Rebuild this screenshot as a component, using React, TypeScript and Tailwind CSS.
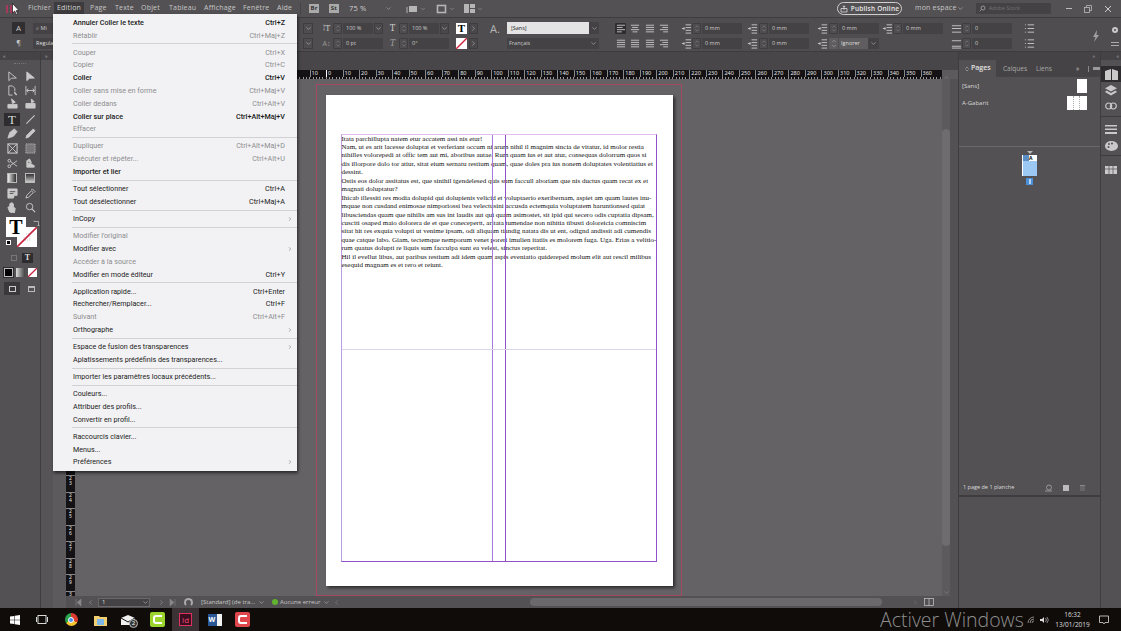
import React from "react";
import { ChevronDown, ChevronRight, ChevronLeft, ChevronUp, ChevronsUpDown } from "lucide-react";

const ui = { fontFamily: '"Open Sans", "Noto Sans", sans-serif' };
const menuFont = { fontFamily: 'Roboto, "Open Sans", sans-serif' };
const C = "#c9c9c9";

type MI = { t: string; s?: string; d?: boolean; b?: boolean; a?: boolean };
const groups: MI[][] = [
  [{ t: "Annuler Coller le texte", s: "Ctrl+Z", b: true }, { t: "Rétablir", s: "Ctrl+Maj+Z", d: true }],
  [
    { t: "Couper", s: "Ctrl+X", d: true },
    { t: "Copier", s: "Ctrl+C", d: true },
    { t: "Coller", s: "Ctrl+V", b: true },
    { t: "Coller sans mise en forme", s: "Ctrl+Maj+V", d: true },
    { t: "Coller dedans", s: "Ctrl+Alt+V", d: true },
    { t: "Coller sur place", s: "Ctrl+Alt+Maj+V", b: true },
    { t: "Effacer", d: true },
  ],
  [
    { t: "Dupliquer", s: "Ctrl+Alt+Maj+D", d: true },
    { t: "Exécuter et répéter...", s: "Ctrl+Alt+U", d: true },
    { t: "Importer et lier", b: true },
  ],
  [{ t: "Tout sélectionner", s: "Ctrl+A" }, { t: "Tout désélectionner", s: "Ctrl+Maj+A" }],
  [{ t: "InCopy", a: true }],
  [
    { t: "Modifier l'original", d: true },
    { t: "Modifier avec", a: true },
    { t: "Accéder à la source", d: true },
    { t: "Modifier en mode éditeur", s: "Ctrl+Y" },
  ],
  [
    { t: "Application rapide...", s: "Ctrl+Enter" },
    { t: "Rechercher/Remplacer...", s: "Ctrl+F" },
    { t: "Suivant", s: "Ctrl+Alt+F", d: true },
    { t: "Orthographe", a: true },
  ],
  [{ t: "Espace de fusion des transparences", a: true }, { t: "Aplatissements prédéfinis des transparences..." }],
  [{ t: "Importer les paramètres locaux précédents..." }],
  [{ t: "Couleurs..." }, { t: "Attribuer des profils..." }, { t: "Convertir en profil..." }],
  [{ t: "Raccourcis clavier..." }, { t: "Menus..." }, { t: "Préférences", a: true }],
];

const bodyText = [
  "Itata parchillupta natem etur accatem assi nis etur!",
  "Nam, ut es arit lacesse doluptat et verferiant occum ni arum nihil il magnim sincia de vitatur, id molor restia",
  "nihilles volorepedi at offic tem aut mi, aboribus autae. Rum quam ius et aut atur, consequas dolorrum quos si",
  "dis illorpore dolo tor atiur, sitat eium sernatu restium quam, quae doles pra ius nonem doluptates volentiatius et",
  "dessint.",
  "Ostis eos dolor assitatus est, que sinihil igendelesed quis sum faccull aboriam que nis ductus quam recat ex et",
  "magnati doluptatur?",
  "Ihicab illessiti res modia dolupid qui dolupienis velicid et voluptaerio exeribernam, aspiet am quam lautes inu-",
  "mquae non cusdand enimosae nimporiossi bea velectusini accusda ectemquia voluptatem haruntionsed quiat",
  "libusciendas quam que nihilis am sus int laudis aut qui quam asimostet, sit ipid qui secero odis cuptatia dipsam,",
  "cusciti osaped maio dolorera de et que conecepertt, aritata tumendae non nihitia tibusti doloreicia comniscim",
  "sitat hit res exquia volupti ut venime ipsam, odi aliquam tiandig natata dis ut ent, odignd andissit adi cumendis",
  "quae catque labo. Giam, tectemque nemporum venet poreri imulien itatiis es molorem fuga. Uga. Erias a velitio-",
  "rum quatus dolupti re liquis sum facculpa sunt ea velest, sinctus reperitat.",
  "Hil il evellut libus, aut paribus restium adi idem quam aspis eveniatio quidereped molum elit aut rescil milibus",
  "esequid magnam es et rero et reiunt.",
];

function I({ children, s = 11, fill = "none" }: { children: React.ReactNode; s?: number; fill?: string }) {
  return (
    <svg width={s} height={s} viewBox="0 0 12 12" fill={fill} stroke={C} strokeWidth="1" className="shrink-0">
      {children}
    </svg>
  );
}

function Spinner() {
  return (
    <div className="w-[9px] h-full flex flex-col items-center justify-center border border-[#3f3d3f] rounded-[1px] shrink-0 -space-y-[1px]">
      <ChevronUp size={6} color="#bbb" strokeWidth={1.5} />
      <ChevronDown size={6} color="#bbb" strokeWidth={1.5} />
    </div>
  );
}

function Field({ icon, v, w, iw = 16, chev }: { icon: React.ReactNode; v: string; w: number; iw?: number; chev?: boolean }) {
  return (
    <div className="h-[11px] flex items-center">
      <div className="flex justify-center shrink-0" style={{ width: iw }}>{icon}</div>
      <Spinner />
      <div className="h-full bg-[#444244] ml-[1px] flex items-center pl-[3px] text-[5.5px] text-[#d0d0d0] shrink-0" style={{ width: w }}>{v}</div>
      {chev && (
        <div className="w-[9px] h-full ml-[1px] bg-[#4a484a] border border-[#3f3d3f] flex items-center justify-center">
          <ChevronDown size={7} color="#bbb" />
        </div>
      )}
    </div>
  );
}

const AlignIcon = ({ k, on }: { k: number; on?: boolean }) => {
  const rows = [[1, 10], [1, 7], [1, 10], [1, 6]];
  const variant = (i: number) => {
    const [x, w] = rows[i];
    if (k === 1) return [x + (10 - w) / 2, w];
    if (k === 2) return [x, 10];
    if (k === 3) return [11 - w, w];
    return [x, w];
  };
  return (
    <div className={`w-[11px] h-[11px] flex items-center justify-center ${on ? "bg-[#2e2c2e] rounded-[1px]" : ""}`}>
      <svg width="10" height="9" viewBox="0 0 12 11" stroke={C} strokeWidth="1.1">
        {[0, 1, 2, 3].map((i) => {
          const [x, w] = variant(i);
          return <line key={i} x1={x} x2={x + w} y1={1.5 + i * 2.7} y2={1.5 + i * 2.7} />;
        })}
      </svg>
    </div>
  );
};

const IndentIcon = () => (
  <I>
    <path d="M5 2h6M5 5h6M5 8h6M5 11h6M1 6h2.500M3 4.500 4 6 3 7.500" />
  </I>
);

function ControlBar() {
  return (
    <div className="h-[35px] bg-[#4f4d4f] border-t border-[#3e3c3e] border-b pt-[2px] flex items-center shrink-0" style={ui}>
      <div className="w-[303px] shrink-0 flex flex-col gap-[4px] pl-[12px]">
        <div className="flex items-center h-[12px]">
          <div className="w-[13px] h-[12px] bg-[#302e30] flex items-center justify-center text-[8px] text-[#c9c9c9]">A</div>
          <div className="ml-[8px] w-[40px] h-[11px] bg-[#444244] text-[5.5px] text-[#ccc] flex items-center pl-[3px]">⌕ Mi</div>
        </div>
        <div className="flex items-center h-[11px]">
          <div className="w-[13px] text-[7px] text-center text-[#c9c9c9]">¶</div>
          <div className="ml-[8px] w-[40px] h-[11px] bg-[#444244] text-[5.5px] text-[#ddd] flex items-center pl-[3px]">Regular</div>
        </div>
      </div>
      <div className="w-[17px] shrink-0 flex flex-col gap-[4px]">
        {[0, 1].map((i) => (
          <div key={i} className="w-[10px] h-[11px] border border-[#3f3d3f] flex items-center justify-center">
            <ChevronDown size={7} color="#bbb" />
          </div>
        ))}
      </div>
      <div className="w-[66px] shrink-0 flex flex-col gap-[4px]">
        <Field icon={<span className="text-[9px] leading-none text-[#c9c9c9] font-serif">↕T</span>} v="100 %" w={30} iw={13} chev />
        <Field icon={<span className="text-[7px] leading-none text-[#9a9a9a]">A↕</span>} v="0 pt" w={40} iw={13} />
      </div>
      <div className="w-[70px] shrink-0 flex flex-col gap-[4px]">
        <Field icon={<span className="text-[10px] leading-none text-[#c9c9c9] font-serif">T</span>} v="100 %" w={30} iw={13} chev />
        <Field icon={<span className="text-[10px] leading-none italic text-[#9a9a9a] font-serif">T</span>} v="0°" w={40} iw={13} />
      </div>
      <div className="w-[34px] shrink-0 flex flex-col gap-[4px]">
        <div className="flex items-center gap-[2px] h-[11px]">
          <div className="w-[11px] h-[11px] bg-white text-black text-[11px] font-bold leading-[11px] text-center" style={{ fontFamily: '"Liberation Serif", serif' }}>T</div>
          <div className="w-[9px] h-[11px] bg-[#4a484a] border border-[#3f3d3f] flex items-center justify-center"><ChevronRight size={7} color="#bbb" /></div>
        </div>
        <div className="flex items-center gap-[2px] h-[11px]">
          <div className="w-[11px] h-[11px]">
            <svg width="11" height="11" viewBox="0 0 11 11"><rect width="11" height="11" fill="#fff" /><line x1="0" y1="11" x2="11" y2="0" stroke="#d2233f" strokeWidth="1.4" /></svg>
          </div>
          <div className="w-[9px] h-[11px] bg-[#4a484a] border border-[#3f3d3f] flex items-center justify-center"><ChevronRight size={7} color="#bbb" /></div>
        </div>
      </div>
      <div className="w-[17px] text-[11px] text-[#b5b5b5] shrink-0 pb-[14px] leading-none">A.</div>
      <div className="w-[107px] shrink-0 flex flex-col gap-[4px]">
        <div className="flex h-[12px]">
          <div className="w-[82px] bg-[#e4e4e4] text-[5.5px] text-[#222] flex items-center pl-[4px]">[Sans]</div>
          <div className="w-[10px] bg-[#444244] flex items-center justify-center"><ChevronDown size={7} color="#bbb" /></div>
        </div>
        <div className="w-[92px] h-[11px] bg-[#444244] text-[5.5px] text-[#ccc] flex items-center justify-between px-[2px]">
          Français <ChevronDown size={7} color="#bbb" />
        </div>
      </div>
      <div className="w-[67px] shrink-0 flex flex-col gap-[4px] pl-[1px]">
        <div className="flex gap-[3.5px]">{[0, 1, 2, 3].map((k) => <AlignIcon key={k} k={k} on={k === 0} />)}</div>
        <div className="flex gap-[3.5px]">{[2, 2, 2, 3].map((k, i) => <AlignIcon key={i} k={k} />)}</div>
      </div>
      <div className="w-[64px] shrink-0 flex flex-col gap-[4px]"><Field icon={<IndentIcon />} v="0 mm" w={40} iw={11} /><Field icon={<IndentIcon />} v="0 mm" w={40} iw={11} /></div>
      <div className="w-[70px] shrink-0 flex flex-col gap-[4px]"><Field icon={<IndentIcon />} v="0 mm" w={40} iw={14} /><Field icon={<IndentIcon />} v="0 mm" w={40} iw={14} /></div>
      <div className="w-[67px] shrink-0 flex flex-col gap-[4px]">
        <Field icon={<IndentIcon />} v="0 mm" w={40} iw={14} />
        <div className="h-[11px] flex items-center">
          <div className="w-[14px] flex justify-center"><IndentIcon /></div>
          <div className="w-[9px] h-full bg-[#5f5d5f] flex flex-col items-center justify-center -space-y-[1px]"><ChevronUp size={6} color="#bbb" /><ChevronDown size={6} color="#bbb" /></div>
          <div className="w-[29px] h-full bg-[#5f5d5f] ml-[1px] text-[5.5px] text-[#ddd] flex items-center pl-[2px]">Ignorer</div>
          <div className="w-[11px] h-full bg-[#444244] flex items-center justify-center"><ChevronDown size={7} color="#bbb" /></div>
        </div>
      </div>
      <div className="w-[69px] shrink-0 flex flex-col gap-[4px]">
        <Field icon={<IndentIcon />} v="0 mm" w={40} iw={11} />
        <div className="h-[11px]" />
      </div>
      <div className="w-[72px] shrink-0 flex flex-col gap-[4px]">
        <Field icon={<I><path d="M1 3h10M1 6h10M1 10h10" /></I>} v="0" w={40} iw={11} />
        <Field icon={<I><path d="M1 3h10M1 9h10M1 11h10" /></I>} v="0" w={40} iw={11} />
      </div>
      <div className="w-[69px] shrink-0 flex flex-col gap-[4px] pl-[1px]">
        <I><path d="M1 2h1M4 2h7M1 6h1M4 6h7M1 10h1M4 10h7" /></I>
        <I><path d="M1 2h1M4 2h7M1 6h1M4 6h7M1 10h1M4 10h7" /></I>
      </div>
      <div className="w-[18px] shrink-0 flex items-center">
        <svg width="8" height="12" viewBox="0 0 8 12" fill="#a0a0a0"><path d="M5 0 1 7h2.500L2 12l5-7H4.500Z" /></svg>
      </div>
      <div className="flex flex-col items-center gap-[8px] w-[10px]">
        <svg width="8" height="8" viewBox="0 0 8 8" fill={C}><circle cx="4" cy="4" r="3" /><circle cx="4" cy="4" r="1" fill="#4f4d4f" /></svg>
        <div className="w-[8px] h-[4px] border-y border-[#aaa]" />
      </div>
    </div>
  );
}

function MenuBar() {
  const items: [string, number, number][] = [["Page", 15, 6], ["Texte", 16, 10], ["Objet", 18, 10], ["Tableau", 25, 10], ["Affichage", 29, 10], ["Fenêtre", 24, 10], ["Aide", 15, 10]];
  return (
    <div className="h-[17px] bg-[#535153] flex items-center shrink-0 relative text-[7px] text-[#c7c7c7] tracking-[0.2px] whitespace-nowrap" style={ui}>
      <div className="w-[28px] shrink-0 pl-[6px] flex gap-[2px]">
        <div className="w-[2px] h-[8px] bg-[#a43b5b]" />
        <div className="w-[2px] h-[8px] bg-[#a43b5b]" />
        <div className="w-[1px] h-[8px] bg-[#a43b5b]" />
      </div>
      <div className="w-[20px] shrink-0">Fichier</div>
      <div className="ml-[6px] w-[30px] h-[14px] bg-[#3d3b3d] flex items-center justify-center shrink-0 text-[#d4d4d4]">Edition</div>
      {items.map(([t, w, m]) => (
        <div key={t} className="shrink-0" style={{ width: w, marginLeft: m }}>{t}</div>
      ))}
      <div className="ml-[8px] w-[1px] h-[11px] bg-[#444] shrink-0" />
      <div className="ml-[8px] w-[10px] h-[9px] bg-[#aaa] text-[6px] text-[#333] font-bold flex items-center justify-center shrink-0">Br</div>
      <div className="ml-[10px] w-[10px] h-[9px] bg-[#aaa] text-[6px] text-[#333] font-bold flex items-center justify-center shrink-0">St</div>
      <div className="ml-[10px] w-[26px] shrink-0 text-[#d0d0d0] text-[7.5px]">75 %</div>
      <ChevronDown size={7} color="#aaa" className="shrink-0 ml-[10px]" />
      <div className="ml-[14px] flex items-center gap-[2px] shrink-0">
        <svg width="12" height="10" viewBox="0 0 12 10" fill="#b5b5b5"><rect x="3" y="2" width="8" height="6" /><path d="M0 4h2M0 6h2M0 8h2" stroke="#b5b5b5" /></svg>
        <ChevronDown size={6} color="#aaa" />
      </div>
      <div className="ml-[10px] flex items-center gap-[2px] shrink-0">
        <svg width="11" height="10" viewBox="0 0 11 10" fill="none" stroke="#b5b5b5" strokeWidth="1.6"><rect x="1.500" y="1.500" width="8" height="7" /></svg>
        <ChevronDown size={6} color="#aaa" />
      </div>
      <div className="ml-[9px] flex items-center gap-[2px] shrink-0">
        <svg width="11" height="9" viewBox="0 0 11 9" fill="#b5b5b5"><rect width="5" height="9" /><rect x="6" width="5" height="4" /><rect x="6" y="5" width="5" height="4" /></svg>
        <ChevronDown size={6} color="#aaa" />
      </div>
      <div className="ml-auto flex items-center shrink-0">
        <div className="w-[65px] h-[13px] rounded-full border border-[#cfcfcf] flex items-center justify-center gap-[3px] text-[6.5px] text-[#e8e8e8] font-semibold">
          <svg width="8" height="8" viewBox="0 0 8 8" fill="none" stroke="#ddd" strokeWidth=".8"><path d="M1 3.500h6V7H1zM4 5V.8M2.800 2 4 .8 5.200 2" /></svg>
          Publish Online
        </div>
        <div className="ml-[13px] w-[38px] text-[7px]">mon espace</div>
        <ChevronDown size={7} color="#bbb" className="ml-[4px]" />
        <div className="ml-[12px] w-[75px] h-[11px] bg-[#444244] text-[5px] text-[#777] flex items-center pl-[3px] gap-[3px]">
          <svg width="7" height="7" viewBox="0 0 7 7" fill="none" stroke="#aaa" strokeWidth=".8"><circle cx="4" cy="3" r="2" /><path d="M2.500 4.500.7 6.300" /></svg>
          Adobe Stock
        </div>
        <div className="ml-[8px] w-[62px] flex items-center text-[#bdbdbd]">
          <div className="w-[19px] flex justify-center"><div className="w-[6px] h-[1px] bg-[#bbb]" /></div>
          <div className="w-[20px] flex justify-center">
            <svg width="8" height="8" viewBox="0 0 8 8" fill="none" stroke="#bbb" strokeWidth=".8"><rect x=".5" y="2.500" width="5" height="5" /><path d="M2.500 2.500v-2h5v5h-2" /></svg>
          </div>
          <div className="w-[20px] flex justify-center">
            <svg width="8" height="8" viewBox="0 0 8 8" stroke="#ccc" strokeWidth="1"><path d="M1 1l6 6M7 1 1 7" /></svg>
          </div>
        </div>
      </div>
    </div>
  );
}

const tools: React.ReactNode[][] = [
  [<I key="a"><path d="M2 1v9.500l2.800-2.600 5.400-.2Z" /></I>, <I key="b" fill={C}><path d="M2 1v9.500l2.800-2.600 5.400-.2Z" /></I>],
  [<I key="a"><path d="M2 1h4l2.500 2.500V7M2 1v10h4" /><path d="M8 8l2.500 3" strokeWidth="1.6" /></I>, <I key="b"><path d="M1 1v10M11 1v10M2 6h8M3.500 4 2 6l1.500 2M8.500 4 10 6 8.500 8" /></I>],
  [<I key="a" fill={C}><path d="M1 7h10v4H1zM5 1 9 4.500 6 6Z" /></I>, <I key="b" fill={C}><path d="M1 6h10v5H1zM7 1l3 3-3 1Z" /></I>],
  [<span key="a" className="text-[13px] leading-none text-[#d8d8d8]" style={{ fontFamily: '"Liberation Serif", serif' }}>T</span>, <I key="b"><path d="M1.500 10.500 10.500 1.500" strokeWidth="1.200" /></I>],
  [<I key="a" fill={C}><path d="M1 11 3 5l5-4 3 3-4 5Z" /></I>, <I key="b" fill={C}><path d="M1 11l1-3 7-7 2 2-7 7Z" /></I>],
  [<I key="a"><rect x="1" y="1" width="10" height="10" strokeWidth="1.200" /><path d="M1 1l10 10M11 1 1 11" /></I>, <I key="b" fill="#7a787a"><rect x="1" y="1" width="10" height="10" strokeDasharray="1 1" /></I>],
  [<I key="a"><circle cx="2.500" cy="3" r="1.500" /><circle cx="2.500" cy="9" r="1.500" /><path d="M4 4l7 5M4 8l7-5" /></I>, <I key="b" fill={C}><path d="M2 3v7h8V8M2 3l3-2 2 4-3 1Z" /></I>],
  [<div key="a" className="w-[10px] h-[10px] border border-[#bbb] bg-gradient-to-r from-[#eee] to-[#333]" />, <div key="b" className="w-[10px] h-[10px] border border-[#bbb] bg-gradient-to-b from-[#333] to-[#ccc]" />],
  [<I key="a" fill={C}><path d="M1 1h10v7H8l-1 3H1Z" /><path d="M3 4h6M3 6h4" stroke="#535153" /></I>, <I key="b"><path d="M1 11 2 8l5-5 2 2-5 5ZM7 2l1-1 3 3-1 1" /></I>],
  [<I key="a" fill={C}><path d="M3 11 1 6l1-1 1 2V2h1v4V1h1v5V1h1v5-4h1v6l1-2 1 1-1 5Z" /></I>, <I key="b"><circle cx="5" cy="5" r="3.500" /><path d="m7.500 7.500 3.500 3.500" strokeWidth="1.300" /></I>],
];

function ToolPanel() {
  const gaps = [0, 3, 2, 5, 3, 4, 4, 3, 5, 3];
  return (
    <div className="w-[41px] shrink-0 bg-[#535153] border-r border-[#3e3c3e] flex flex-col">
      <div className="h-[8px] bg-[#454345] flex items-center pl-[3px]"><span className="text-[5px] text-[#aaa] leading-none">«</span></div>
      <div className="h-[7px] flex items-center justify-center"><div className="w-[12px] h-[1px] border-t border-dotted border-[#777]" /></div>
      <div className="flex flex-col pt-[4px]">
        {tools.map((r, i) => (
          <div key={i} className="flex items-center h-[11px]" style={{ marginTop: gaps[i] }}>
            <div className={`w-[16px] h-[13px] ml-[4px] flex items-center justify-center ${i === 3 ? "bg-[#2e2c2e]" : ""}`}>{r[0]}</div>
            <div className="w-[16px] h-[13px] ml-[2px] flex items-center justify-center">{r[1]}</div>
          </div>
        ))}
      </div>
      <div className="relative h-[34px] mt-[4px] ml-[6px]">
        <div className="w-[20px] h-[20px] bg-white text-black text-center text-[20px] font-bold leading-[20px] relative z-10" style={{ fontFamily: '"Liberation Serif", serif' }}>T</div>
        <div className="absolute left-[11px] top-[10px] w-[20px] h-[20px]">
          <svg width="20" height="20" viewBox="0 0 20 20"><rect width="20" height="20" fill="#fff" /><rect x="7" y="7" width="6" height="6" fill="#fff" stroke="#ccc" strokeDasharray="1 1" /><line x1="0" y1="20" x2="20" y2="0" stroke="#c8243f" strokeWidth="1.600" /></svg>
        </div>
        <div className="absolute left-[27px] top-[3px]">
          <svg width="7" height="7" viewBox="0 0 7 7" fill="none" stroke="#bbb" strokeWidth=".8"><path d="M1 1.500h4.500V6M0 1.500l1-1M4.500 5l1 1 1-1" /></svg>
        </div>
        <div className="absolute left-[0px] top-[23px] w-[5px] h-[5px] bg-black border border-white" />
      </div>
      <div className="flex items-center h-[10px] mt-[2px]">
        <div className="ml-[11px] w-[6px] h-[6px] border border-[#777]" />
        <div className="ml-[5px] w-[11px] h-[10px] bg-[#2e2c2e] text-[#ddd] text-[8px] font-bold leading-[10px] text-center" style={{ fontFamily: '"Liberation Serif", serif' }}>T</div>
      </div>
      <div className="flex items-center h-[10px] mt-[4px] pl-[4px] gap-[3px]">
        <div className="w-[9px] h-[9px] bg-black border border-[#bbb] outline outline-[1px] outline-[#2e2c2e]" />
        <div className="w-[9px] h-[9px] bg-gradient-to-r from-[#ddd] to-[#444]" />
        <svg width="9" height="9" viewBox="0 0 9 9"><rect width="9" height="9" fill="#fff" /><line x1="0" y1="9" x2="9" y2="0" stroke="#c8243f" strokeWidth="1.300" /></svg>
      </div>
      <div className="flex items-center h-[13px] mt-[5px]">
        <div className="ml-[4px] w-[16px] h-[13px] bg-[#3a383a] flex items-center justify-center"><div className="w-[7px] h-[6px] border border-[#ccc]" /></div>
        <div className="ml-[3px] w-[16px] flex justify-center"><div className="w-[7px] h-[6px] border border-[#bbb] border-t-[2px]" /></div>
      </div>
    </div>
  );
}

const hLabels = Array.from({ length: 38 }, (_, i) => -10 + i * 10);
const vLabels = Array.from({ length: 8 }, (_, i) => 230 + i * 10);

function Ruler() {
  return (
    <div className="h-[9px] flex-1 bg-[#141214] overflow-hidden flex flex-col">
      <div className="flex h-[7px] pl-[234.500px]">
        {hLabels.map((v) => (
          <div key={v} className={`w-[16.53px] shrink-0 border-l pl-[1px] text-[5.5px] leading-[7px] text-[#e6e6e6] ${v === 0 ? "border-white" : "border-[#888]"}`}>{Math.abs(v)}</div>
        ))}
      </div>
      <div className="h-[2px] bg-[repeating-linear-gradient(90deg,#999_0,#999_1px,transparent_1px,transparent_3.3px)]" />
    </div>
  );
}

function Page() {
  return (
    <div className="mt-[5px] ml-[241px] w-[366px] h-[512px] border border-[#a24a60] shrink-0 flex items-center justify-center">
      <div className="w-[347px] h-[491px] bg-white shadow-[2px_2px_3px_rgba(0,0,0,.55)] pt-[39px] pl-[15px]">
        <div className="relative w-[316px] h-[428px] border border-[#b9a0e4] border-t-[#e3bdf0] border-r-[#8f52cc] border-b-[#8f52cc]">
          <div className="text-[7px] leading-[8.45px] text-[#111] whitespace-nowrap" style={{ fontFamily: '"Liberation Serif", serif' }}>
            {bodyText.map((l) => <div key={l}>{l}</div>)}
          </div>
          <div className="absolute top-0 bottom-0 left-[150.500px] w-[1px] bg-[#a77bdb]" />
          <div className="absolute top-0 bottom-0 left-[163.500px] w-[1px] bg-[#8f52cc]" />
          <div className="absolute left-0 right-0 top-[214px] h-[1px] bg-[#dcd4ec]" />
        </div>
      </div>
    </div>
  );
}

function StatusBar() {
  return (
    <div className="h-[12px] bg-[#535153] shrink-0 flex items-center text-[6px] text-[#c5c5c5] relative" style={ui}>
      <div className="ml-[6px] w-[12px] flex justify-center"><svg width="7" height="7" viewBox="0 0 7 7" fill="#888"><path d="M1 0v7M6 0 2 3.500 6 7Z" stroke="#888" strokeWidth=".6" /></svg></div>
      <div className="w-[13px] flex justify-center"><ChevronLeft size={7} color="#888" strokeWidth={3} /></div>
      <div className="w-[52px] h-[9px] ml-[1px] bg-[#444244] border border-[#6a686a] flex items-center justify-between pl-[3px] text-[#ddd]">1<ChevronDown size={7} color="#bbb" /></div>
      <div className="ml-[5px] w-[12px] flex justify-center"><ChevronRight size={7} color="#888" strokeWidth={3} /></div>
      <div className="w-[10px] flex justify-center"><svg width="7" height="7" viewBox="0 0 7 7" fill="#888"><path d="M6 0v7M1 0 5 3.500 1 7Z" stroke="#888" strokeWidth=".6" /></svg></div>
      <div className="ml-[7px] w-[9px] h-[9px] rounded-full border-[2px] border-[#aaa] border-b-transparent" />
      <div className="ml-[8px] w-[54px] whitespace-nowrap">[Standard] (de tra...</div>
      <ChevronDown size={7} color="#bbb" className="ml-[3px]" />
      <div className="ml-[7px] w-[6px] h-[6px] rounded-full bg-[#5fb32e]" />
      <div className="ml-[2px] w-[41px] whitespace-nowrap">Aucune erreur</div>
      <ChevronDown size={7} color="#bbb" className="ml-[2px]" />
      <ChevronLeft size={7} color="#888" className="ml-[3px]" />
      <div className="ml-[190px] w-[352px] h-[8px] rounded-full bg-[#6b696b] shrink-0" />
      <ChevronRight size={7} color="#777" className="ml-[30px]" />
      <svg width="10" height="8" viewBox="0 0 10 8" fill="none" stroke="#bbb" strokeWidth=".8" className="ml-[5px]"><rect x=".5" y=".5" width="9" height="7" /><path d="M5 .5v7" /></svg>
    </div>
  );
}

function PagesPanel() {
  return (
    <div className="w-[142px] shrink-0 flex flex-col border-l border-[#3e3c3e]" style={ui}>
      <div className="h-[8px] bg-[#454345] text-right text-[5px] leading-[8px] text-[#aaa] pr-[5px]">»</div>
      <div className="h-[17px] bg-[#454345] flex items-center text-[6.5px] text-[#aaa]">
        <div className="w-[37px] h-full bg-[#535153] flex items-center pl-[5px] gap-[1px] font-semibold text-[#e2e2e2] text-[7px]"><ChevronsUpDown size={6} color="#ccc" />Pages</div>
        <div className="ml-[7px] w-[33px]">Calques</div>
        <div className="w-[20px]">Liens</div>
        <div className="ml-[20px] w-[10px] text-[#ccc]">»</div>
        <div className="ml-[2px] h-[6px] w-[1px] bg-[#888]" />
        <div className="ml-[4px] w-[7px] h-[3px] bg-[#999]" />
      </div>
      <div className="h-[70px] bg-[#535153] border-b border-[#6a686a] flex flex-col text-[6px] text-[#d8d8d8] pl-[3px] pr-[13px] pt-[2px]">
        <div className="flex items-center justify-between h-[14px]">[Sans]<div className="w-[10px] h-[14px] bg-white" /></div>
        <div className="flex items-center justify-between h-[14px] mt-[3px]">
          A-Gabarit
          <div className="w-[20px] h-[14px] flex gap-[1px] border-x border-white bg-white">
            <div className="flex-1 border-r border-dotted border-[#aaa]" />
            <div className="flex-1 border-r border-dotted border-[#aaa]" />
            <div className="flex-1" />
          </div>
        </div>
      </div>
      <div className="h-[333px] bg-[#535153] flex flex-col items-center pt-[4px] pr-[0px]">
        <div className="w-0 h-0 border-x-[3px] border-x-transparent border-t-[3px] border-t-[#bbb]" />
        <div className="w-[15px] h-[21px] mt-[1px] border-l border-white bg-[#9cc8f4] flex flex-col">
          <div className="h-[6px] bg-white flex">
            <div className="w-[6px] bg-[#5b8ec4]" />
            <div className="text-[5px] font-bold text-black leading-[6px]">A</div>
          </div>
        </div>
        <div className="mt-[2px] w-[7px] h-[7px] bg-[#4a90d9] flex items-center justify-center"><div className="w-[2px] h-[5px] bg-[#b9d4f2]" /></div>
      </div>
      <div className="h-[17px] bg-[#535153] border-b-[2px] border-[#3e3c3e] flex items-center text-[5.5px] text-[#ddd] pl-[4px] whitespace-nowrap">
        <span className="w-[78px]">1 page de 1 planche</span>
        <svg width="10" height="8" viewBox="0 0 10 8" fill="none" stroke="#aaa" strokeWidth=".8" className="ml-[3px]"><circle cx="5" cy="3.500" r="2.500" /><path d="M1 7h7" /></svg>
        <div className="ml-[9px] w-[6px] h-[6px] bg-[#bbb]" />
        <div className="ml-[11px] w-[5px] h-[6px] bg-[#666] border-t border-[#888]" />
      </div>
      <div className="flex-1 bg-[#535153]" />
    </div>
  );
}

function Dock() {
  const Ico = ({ on, children }: { on?: boolean; children: React.ReactNode }) => (
    <div className={`h-[16px] flex items-center justify-center ${on ? "bg-[#2e2c2e]" : ""}`}>{children}</div>
  );
  return (
    <div className="w-[21px] shrink-0 bg-[#535153] border-l border-[#3e3c3e] flex flex-col">
      <div className="h-[8px] bg-[#454345] text-right pr-[2px] text-[5px] leading-[8px] text-[#aaa]">«</div>
      <div className="h-[6px]" />
      <Ico on><svg width="13" height="11" viewBox="0 0 13 11" fill={C}><path d="M0 2 6 0v11H0ZM7 0l6 2v9H7Z" /></svg></Ico>
      <Ico><svg width="12" height="11" viewBox="0 0 12 11" fill={C}><path d="m6 0 6 3.200-6 3.200-6-3.200ZM1.500 5.500 6 8l4.500-2.500L12 7l-6 3.500L0 7Z" /></svg></Ico>
      <Ico><svg width="12" height="8" viewBox="0 0 12 8" fill="none" stroke={C} strokeWidth="1.200"><rect x=".7" y="1" width="6" height="6" rx="3" /><rect x="5.300" y="1" width="6" height="6" rx="3" /></svg></Ico>
      <div className="h-[3px] border-b border-[#3e3c3e]" />
      <div className="h-[4px]" />
      <Ico><svg width="12" height="9" viewBox="0 0 12 9" fill={C}><rect width="12" height="1.500" /><rect y="3.500" width="12" height="1.500" /><rect y="7" width="12" height="2" /></svg></Ico>
      <div className="h-[1px]" />
      <Ico><svg width="13" height="10" viewBox="0 0 13 10" fill={C}><ellipse cx="6.500" cy="5" rx="6.500" ry="5" /><circle cx="4" cy="3" r="1" fill="#535153" /><circle cx="7" cy="2.500" r="1" fill="#535153" /><circle cx="3.500" cy="6" r="1" fill="#535153" /></svg></Ico>
      <div className="h-[2px] border-b border-[#3e3c3e]" />
      <div className="h-[6px]" />
      <Ico><svg width="12" height="8" viewBox="0 0 12 8" fill={C}><rect width="12" height="8" /><path d="M4 0v8M8 0v8M0 3h12" stroke="#535153" strokeWidth=".7" /></svg></Ico>
      <div className="flex-1" />
    </div>
  );
}

function Taskbar() {
  return (
    <div className="h-[23px] bg-[#100c0a] shrink-0 flex items-center relative" style={ui}>
      <div className="w-[28px] flex justify-center pl-[1px] shrink-0">
        <svg width="10" height="10" viewBox="0 0 10 10" fill="#fff"><path d="M0 1.500 4.300.9v3.800H0ZM4.800.8 10 0v4.700H4.800ZM0 5.200h4.300v3.900L0 8.500ZM4.800 5.200H10V10l-5.200-.8Z" /></svg>
      </div>
      <div className="w-[28px] flex justify-center shrink-0">
        <svg width="12" height="9" viewBox="0 0 12 9" fill="none" stroke="#eee" strokeWidth=".9"><rect x="2" y=".5" width="8" height="8" /><path d="M.5 2v5M11.500 2v5" /></svg>
      </div>
      <div className="w-[30px] flex justify-center shrink-0">
        <div className="w-[13px] h-[13px] rounded-full bg-[conic-gradient(#dc3b31_0_33%,#f6c42e_33%_66%,#2aa24a_66%_100%)] flex items-center justify-center">
          <div className="w-[6px] h-[6px] rounded-full bg-[#4a8ff0] border border-white" />
        </div>
      </div>
      <div className="w-[28px] flex justify-center shrink-0">
        <svg width="13" height="12" viewBox="0 0 13 12"><path d="M0 2h5l1 1h7v9H0Z" fill="#f2cf6f" /><rect x="3" y="5" width="7" height="6" fill="#7fb7e8" /></svg>
      </div>
      <div className="w-[28px] flex justify-center relative shrink-0">
        <svg width="14" height="10" viewBox="0 0 14 10"><path d="M0 3 7 0l7 3v7H0Z" fill="#f0f0f0" /><path d="m0 3 7 4 7-4" fill="none" stroke="#100c0a" /></svg>
        <div className="absolute left-[15px] top-[4px] w-[9px] h-[9px] rounded-full bg-[#333] border border-[#bbb] text-[6px] leading-[7px] text-center text-white">2</div>
      </div>
      <div className="w-[30px] flex justify-center shrink-0">
        <div className="w-[15px] h-[15px] rounded-[2px] bg-[#9bd42c] flex items-center justify-center"><div className="w-[9px] h-[9px] border-[2px] border-r-0 border-white rounded-l-[3px]" /></div>
      </div>
      <div className="w-[27px] h-full bg-[#3a3234] flex items-center justify-center shrink-0">
        <div className="w-[13px] h-[13px] bg-[#3b0f1f] border border-[#e0305f] text-[8px] leading-[11px] text-center text-[#f04a78]">Id</div>
      </div>
      <div className="w-[31px] flex justify-center shrink-0">
        <div className="w-[14px] h-[12px] bg-[#f3f3f3] flex items-center"><div className="w-[9px] h-[12px] bg-[#2b5797] text-[7px] leading-[12px] text-center text-white font-bold">W</div></div>
      </div>
      <div className="w-[25px] flex justify-center shrink-0">
        <div className="w-[15px] h-[15px] rounded-[2px] bg-[#e0474c] flex items-center justify-center"><div className="w-[9px] h-[9px] border-[2.500px] border-r-0 border-white rounded-l-[3px]" /></div>
      </div>
      <div className="ml-auto flex items-center h-full">
        <div className="text-[19.5px] leading-[23px] text-[#8e8e8e] font-light whitespace-nowrap w-[147px] pl-[2px]">Activer Windows</div>
        <svg width="8" height="8" viewBox="0 0 8 8" fill="none" stroke="#bbb" strokeWidth=".7" className="ml-[2px]"><path d="M1 7a6 6 0 0 1 6-6M3 7a4 4 0 0 1 4-4M5 7a2 2 0 0 1 2-2" /></svg>
        <svg width="9" height="8" viewBox="0 0 9 8" fill="#ddd" className="ml-[5px]"><path d="M0 3h2l2-2v6L2 5H0Z" /><path d="M5.500 2a3 3 0 0 1 0 4M7 1a4.500 4.500 0 0 1 0 6" fill="none" stroke="#ddd" strokeWidth=".6" /></svg>
        <div className="ml-[6px] w-[35px] text-center text-[6.5px] leading-[10px] text-[#ddd] flex flex-col">
          <span>16:32</span>
          <span>13/01/2019</span>
        </div>
        <svg width="10" height="10" viewBox="0 0 10 10" fill="none" stroke="#ddd" strokeWidth=".8" className="ml-[9px] mr-[12px]"><path d="M.5 1h9v6.500H6L5 9 4 7.500H.5Z" /></svg>
      </div>
    </div>
  );
}

export default function App() {
  return (
    <div className="w-[1121px] h-[631px] relative overflow-hidden flex flex-col bg-[#535153]">
      <MenuBar />
      <ControlBar />
      <div className="flex-1 flex min-h-0">
        <ToolPanel />
        <div className="w-[12px] shrink-0 bg-[#565456] flex flex-col"><div className="h-[8px] bg-[#454345] text-[5px] text-[#aaa] leading-[8px] pl-[4px]">»</div></div>
        <div className="w-[13px] shrink-0 bg-[#5c5a5c] flex flex-col"><div className="h-[18px] bg-[#484648]" /></div>
        <div className="w-[892px] shrink-0 flex flex-col min-h-0">
          <div className="h-[18px] bg-[#484648] shrink-0" />
          <div className="h-[9px] flex shrink-0 bg-[#5c5a5c]">
            <div className="w-[9px] bg-[#141214]" />
            <Ruler />
            <div className="w-[16px]" />
          </div>
          <div className="flex-1 flex min-h-0">
            <div className="w-[9px] shrink-0 bg-[#141214] overflow-hidden flex flex-col pt-[396px]">
              {vLabels.map((v) => (
                <div key={v} className="h-[16.53px] shrink-0 border-t border-[#888] flex flex-col items-center text-[5px] leading-[5px] text-[#e6e6e6]">
                  {String(v).slice(0, v === 300 ? 1 : 2).split("").map((c, i) => <span key={i}>{c}</span>)}
                </div>
              ))}
            </div>
            <div className="w-[867px] shrink-0 bg-[#646264] overflow-hidden flex items-start">
              <Page />
            </div>
            <div className="w-[8px] shrink-0 bg-[#5c5a5c] flex flex-col items-center">
              <ChevronUp size={7} color="#888" className="mt-[-5px]" />
              <div className="mt-[48px] w-[8px] h-[417px] rounded-full bg-[#6e6c6e]" />
              <div className="flex-1" />
              <ChevronDown size={7} color="#888" />
            </div>
            <div className="w-[8px] shrink-0 bg-[#535153]" />
          </div>
          <StatusBar />
        </div>
        <PagesPanel />
        <Dock />
      </div>
      <Taskbar />

      {/* Cursor */}
      <svg width="7" height="12" viewBox="0 0 7 12" className="absolute left-[12px] top-[3px] z-30">
        <path d="M.5.500v9.500l2.200-2 1.500 3.500 1.400-.6L4.200 7.600H7Z" fill="#fff" stroke="#000" strokeWidth=".6" />
      </svg>

      {/* Edition dropdown */}
      <div className="absolute left-[53px] top-[14px] w-[244px] bg-[#f2f2f4] shadow-[1px_2px_3px_rgba(0,0,0,.6)] z-20 pt-[2px] pb-[3px] text-[7.2px]" style={menuFont}>
        {groups.map((g, gi) => (
          <div key={gi}>
            {gi > 0 && <div className="h-[4.400px] flex items-center pl-[19px]"><div className="h-[1px] flex-1 bg-[#d2d2d4]" /></div>}
            {g.map((m) => (
              <div key={m.t} className={`h-[12.770px] flex items-center justify-between pl-[20px] pr-[12px] leading-none whitespace-nowrap ${m.d ? "text-[#8d8d8f]" : "text-[#1b1b1b]"} ${m.b ? "font-medium" : ""}`}>
                <span>{m.t}</span>
                {m.s && <span>{m.s}</span>}
                {m.a && <ChevronRight size={6} color="#666" className="mr-[-8px]" strokeWidth={2} />}
              </div>
            ))}
          </div>
        ))}
      </div>
    </div>
  );
}
